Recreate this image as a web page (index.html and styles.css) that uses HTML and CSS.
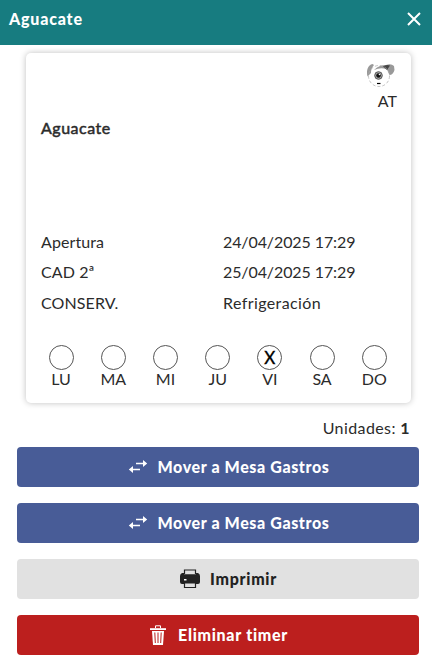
FILE: index.html
```html
<!DOCTYPE html>
<html lang="es">
<head>
  <meta charset="UTF-8">
  <meta name="viewport" content="width=device-width, initial-scale=1">
  <title>Aguacate</title>
  <link rel="stylesheet" href="styles.css">
</head>
<body>

  <!-- Cabecera -->
  <header class="header">
    <h1 class="titulo">Aguacate</h1>
    <svg class="cerrar" viewBox="0 0 14 14" width="14" height="14">
      <path d="M1 1L13 13M13 1L1 13" stroke="#fff" stroke-width="2" fill="none"/>
    </svg>
  </header>

  <!-- Etiqueta -->
  <section class="card">
    <div class="usuario">
      <svg class="avatar" viewBox="0 0 30 26" width="30" height="26">
        <path d="M6.500 2C2 3 0 8 1.500 14.500L5 11Q5 6 8 3Z" fill="#999"/>
        <path d="M8 8C12 4 16 3 20 3Q25 1 28 4L28.500 8Q27 13 23.500 13L21 7.500Q15 5 8 8Z" fill="#999"/>
        <path d="M17 4.500Q20 2 24 3.500L21 8Z" fill="#444"/>
        <circle cx="13" cy="14" r="10.500" fill="none" stroke="#aaa" stroke-width=".7" stroke-dasharray="3 2"/>
        <circle cx="12.500" cy="13.500" r="3.800" fill="#aaa" stroke="#555"/>
        <circle cx="12.500" cy="13.500" r="2.300" fill="#111"/>
        <circle cx="13.500" cy="12.500" r=".8" fill="#fff"/>
        <path d="M11 21.500h3.500" stroke="#000" stroke-width="1.200"/>
      </svg>
      <span class="iniciales">AT</span>
    </div>
    <div class="producto">Aguacate</div>
    <div class="datos">
      <div class="fila"><span class="campo">Apertura</span><span class="fecha">24/04/2025 17:29</span></div>
      <div class="fila"><span class="campo">CAD 2ª</span><span class="fecha">25/04/2025 17:29</span></div>
      <div class="fila"><span class="campo">CONSERV.</span><span class="valor">Refrigeración</span></div>
    </div>
    <div class="dias">
      <div class="dia"><span class="circulo"></span>LU</div>
      <div class="dia"><span class="circulo"></span>MA</div>
      <div class="dia"><span class="circulo"></span>MI</div>
      <div class="dia"><span class="circulo"></span>JU</div>
      <div class="dia"><span class="circulo">X</span>VI</div>
      <div class="dia"><span class="circulo"></span>SA</div>
      <div class="dia"><span class="circulo"></span>DO</div>
    </div>
  </section>

  <div class="unidades">Unidades: <b>1</b></div>

  <!-- Acciones -->
  <div class="acciones">
    <button class="btn mover">
      <svg viewBox="0 0 20 16" width="20" height="16">
        <path d="M8 4.500h8M4 10.500h8" stroke="#fff" stroke-width="1.500"/>
        <path d="M15 1L19.200 4.500L15 8ZM5 7L0.800 10.500L5 14Z" fill="#fff"/>
      </svg>
      <span>Mover a Mesa Gastros</span>
    </button>
    <button class="btn mover">
      <svg viewBox="0 0 20 16" width="20" height="16">
        <path d="M8 4.500h8M4 10.500h8" stroke="#fff" stroke-width="1.500"/>
        <path d="M15 1L19.200 4.500L15 8ZM5 7L0.800 10.500L5 14Z" fill="#fff"/>
      </svg>
      <span>Mover a Mesa Gastros</span>
    </button>
    <button class="btn imprimir">
      <svg viewBox="0 0 20 20" width="20" height="20">
        <path d="M4.500 5V1h11v4" fill="none" stroke="#222" stroke-width="1.200"/>
        <path d="M2 4h2v1.200h12V4h2q2 1 2 3v6q0 2-2 2H2q-2 0-2-2V7q0-2 2-3z" fill="#222"/>
        <path d="M4.500 14v4.500h11V14z" fill="#e1e1e1" stroke="#222" stroke-width="1.200"/>
        <rect x="4" y="10" width="2.500" height="1.500" fill="#fff"/>
      </svg>
      <span>Imprimir</span>
    </button>
    <button class="btn eliminar">
      <svg viewBox="0 0 16 20" width="16" height="20">
        <path d="M5.500 3V.8h5V3" fill="none" stroke="#fff" stroke-width="1"/>
        <path d="M0 3.200h16v1.800H0z" fill="#fff"/>
        <path d="M2 6h12l-1 14H3z" fill="#fff"/>
        <path d="M4.800 7.500l.5 10.500M8 7.500V18M11.200 7.500l-.5 10.500" stroke="#bc1f1e" stroke-width="1"/>
      </svg>
      <span>Eliminar timer</span>
    </button>
  </div>

</body>
</html>
```
FILE: styles.css
```css
* {
  box-sizing: border-box;
}

body {
  margin: 0;
  font-family: Lato, 'Liberation Sans', sans-serif;
  font-size: 16px;
  line-height: 20px;
  color: #2b2b2b;
  background: #fff;
}

.header {
  display: flex;
  justify-content: space-between;
  align-items: flex-start;
  height: 45px;
  padding: 9px 11px 0 9px;
  background: #177c80;
  color: #fff;
}

.titulo {
  margin: 0;
  font-size: 16px;
  font-weight: 900;
  letter-spacing: 0.8px;
}

.cerrar {
  margin-top: 3px;
}

.card {
  height: 350px;
  margin: 8px 21px 0 26px;
  padding: 9px 14px 0 15px;
  border-radius: 5px;
  box-shadow: 0 0 6px rgba(0, 0, 0, 0.25);
}

.usuario {
  display: flex;
  flex-direction: column;
  align-items: flex-end;
  height: 56px;
}

.avatar {
  margin-right: 1px;
}

.iniciales {
  margin-top: 3px;
}

.producto {
  height: 104px;
  letter-spacing: 0.5px;
  -webkit-text-stroke: 0.5px #2b2b2b;
}

.fila {
  display: flex;
  height: 30.500px;
  padding-top: 10px;
}

.fila:nth-child(2) {
  padding-top: 9px;
}

.campo {
  width: 182px;
  letter-spacing: 0.1px;
}

.fecha {
  letter-spacing: -0.1px;
}

.valor {
  letter-spacing: 0.4px;
}

/* Dias de la semana */
.dias {
  display: flex;
  margin: 31px 0 0 -6px;
}

.dia {
  flex: 0 0 52.200px;
  display: flex;
  flex-direction: column;
  align-items: center;
  line-height: 18px;
}

.circulo {
  width: 25px;
  height: 25px;
  border: 1px solid #555;
  border-radius: 50%;
  font-size: 17px;
  line-height: 23px;
  text-align: center;
  color: #000;
  -webkit-text-stroke: 0.4px #000;
}

.unidades {
  margin: 15px 22px 0 0;
  text-align: right;
  letter-spacing: 0.4px;
}

.acciones {
  display: flex;
  flex-direction: column;
  gap: 16px;
  padding: 9px 13px 0 17px;
}

.btn {
  display: flex;
  justify-content: center;
  align-items: center;
  gap: 10px;
  height: 40px;
  padding: 0;
  border: none;
  border-radius: 4px;
  font-family: inherit;
  font-size: 16px;
  font-weight: 900;
  letter-spacing: 0.6px;
  color: #fff;
}

.btn span {
  padding-bottom: 2px;
}

.mover {
  padding-left: 21px;
  background: #485c97;
}

.imprimir {
  padding-left: 21px;
  letter-spacing: 0.7px;
  background: #e1e1e1;
  color: #222;
}

.eliminar {
  gap: 12px;
  padding-left: 2px;
  letter-spacing: 0.7px;
  background: #bc1f1e;
}
```
